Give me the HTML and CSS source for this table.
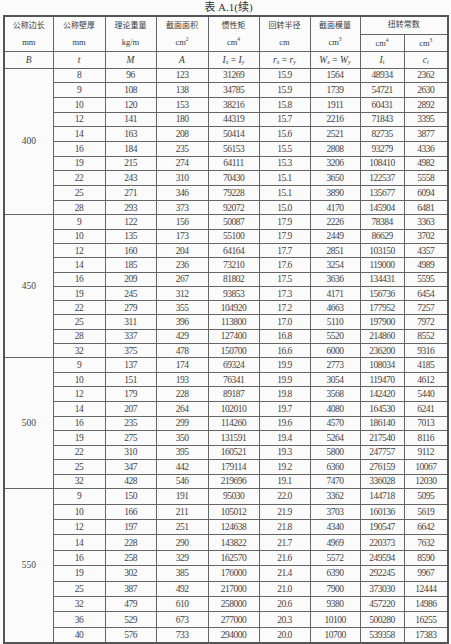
FILE: index.html
```html
<!DOCTYPE html>
<html lang="zh">
<head>
<meta charset="utf-8">
<title>表 A.1(续)</title>
<link rel="stylesheet" href="styles.css">
</head>
<body>
<div class="title">表 A.1(续)</div>
<table class="tbl">
<colgroup>
<col class="c1"><col class="c2"><col class="c3"><col class="c4"><col class="c5"><col class="c6"><col class="c7"><col class="c8"><col class="c9">
</colgroup>
<thead>
<tr class="h1">
<th rowspan="2"><div>公称边长</div><div class="u">mm</div></th>
<th rowspan="2"><div>公称壁厚</div><div class="u">mm</div></th>
<th rowspan="2"><div>理论重量</div><div class="u">kg/m</div></th>
<th rowspan="2"><div>截面面积</div><div class="u">cm<sup>2</sup></div></th>
<th rowspan="2"><div>惯性矩</div><div class="u">cm<sup>4</sup></div></th>
<th rowspan="2"><div>回转半径</div><div class="u">cm</div></th>
<th rowspan="2"><div>截面模量</div><div class="u">cm<sup>3</sup></div></th>
<th colspan="2">扭转常数</th>
</tr>
<tr class="h2">
<th class="u">cm<sup>4</sup></th>
<th class="u">cm<sup>3</sup></th>
</tr>
<tr class="sym">
<th><i>B</i></th>
<th><i>t</i></th>
<th><i>M</i></th>
<th><i>A</i></th>
<th><i>I<sub>x</sub></i> = <i>I<sub>y</sub></i></th>
<th><i>r<sub>x</sub></i> = <i>r<sub>y</sub></i></th>
<th><i>W<sub>x</sub></i> = <i>W<sub>y</sub></i></th>
<th><i>I<sub>t</sub></i></th>
<th><i>c<sub>t</sub></i></th>
</tr>
</thead>
<tbody class="g1">
<tr><td rowspan="10" class="b">400</td><td>8</td><td>96</td><td>123</td><td>31269</td><td>15.9</td><td>1564</td><td>48934</td><td>2362</td></tr>
<tr><td>9</td><td>108</td><td>138</td><td>34785</td><td>15.9</td><td>1739</td><td>54721</td><td>2630</td></tr>
<tr><td>10</td><td>120</td><td>153</td><td>38216</td><td>15.8</td><td>1911</td><td>60431</td><td>2892</td></tr>
<tr><td>12</td><td>141</td><td>180</td><td>44319</td><td>15.7</td><td>2216</td><td>71843</td><td>3395</td></tr>
<tr><td>14</td><td>163</td><td>208</td><td>50414</td><td>15.6</td><td>2521</td><td>82735</td><td>3877</td></tr>
<tr><td>16</td><td>184</td><td>235</td><td>56153</td><td>15.5</td><td>2808</td><td>93279</td><td>4336</td></tr>
<tr><td>19</td><td>215</td><td>274</td><td>64111</td><td>15.3</td><td>3206</td><td>108410</td><td>4982</td></tr>
<tr><td>22</td><td>243</td><td>310</td><td>70430</td><td>15.1</td><td>3650</td><td>122537</td><td>5558</td></tr>
<tr><td>25</td><td>271</td><td>346</td><td>79228</td><td>15.1</td><td>3890</td><td>135677</td><td>6094</td></tr>
<tr><td>28</td><td>293</td><td>373</td><td>92072</td><td>15.0</td><td>4170</td><td>145904</td><td>6481</td></tr>
</tbody>
<tbody class="g2">
<tr><td rowspan="10" class="b">450</td><td>9</td><td>122</td><td>156</td><td>50087</td><td>17.9</td><td>2226</td><td>78384</td><td>3363</td></tr>
<tr><td>10</td><td>135</td><td>173</td><td>55100</td><td>17.9</td><td>2449</td><td>86629</td><td>3702</td></tr>
<tr><td>12</td><td>160</td><td>204</td><td>64164</td><td>17.7</td><td>2851</td><td>103150</td><td>4357</td></tr>
<tr><td>14</td><td>185</td><td>236</td><td>73210</td><td>17.6</td><td>3254</td><td>119000</td><td>4989</td></tr>
<tr><td>16</td><td>209</td><td>267</td><td>81802</td><td>17.5</td><td>3636</td><td>134431</td><td>5595</td></tr>
<tr><td>19</td><td>245</td><td>312</td><td>93853</td><td>17.3</td><td>4171</td><td>156736</td><td>6454</td></tr>
<tr><td>22</td><td>279</td><td>355</td><td>104920</td><td>17.2</td><td>4663</td><td>177952</td><td>7257</td></tr>
<tr><td>25</td><td>311</td><td>396</td><td>113800</td><td>17.0</td><td>5110</td><td>197900</td><td>7972</td></tr>
<tr><td>28</td><td>337</td><td>429</td><td>127400</td><td>16.8</td><td>5520</td><td>214860</td><td>8552</td></tr>
<tr><td>32</td><td>375</td><td>478</td><td>150700</td><td>16.6</td><td>6000</td><td>236200</td><td>9316</td></tr>
</tbody>
<tbody class="g3">
<tr><td rowspan="9" class="b">500</td><td>9</td><td>137</td><td>174</td><td>69324</td><td>19.9</td><td>2773</td><td>108034</td><td>4185</td></tr>
<tr><td>10</td><td>151</td><td>193</td><td>76341</td><td>19.9</td><td>3054</td><td>119470</td><td>4612</td></tr>
<tr><td>12</td><td>179</td><td>228</td><td>89187</td><td>19.8</td><td>3568</td><td>142420</td><td>5440</td></tr>
<tr><td>14</td><td>207</td><td>264</td><td>102010</td><td>19.7</td><td>4080</td><td>164530</td><td>6241</td></tr>
<tr><td>16</td><td>235</td><td>299</td><td>114260</td><td>19.6</td><td>4570</td><td>186140</td><td>7013</td></tr>
<tr><td>19</td><td>275</td><td>350</td><td>131591</td><td>19.4</td><td>5264</td><td>217540</td><td>8116</td></tr>
<tr><td>22</td><td>310</td><td>395</td><td>160521</td><td>19.3</td><td>5800</td><td>247757</td><td>9112</td></tr>
<tr><td>25</td><td>347</td><td>442</td><td>179114</td><td>19.2</td><td>6360</td><td>276159</td><td>10067</td></tr>
<tr><td>32</td><td>428</td><td>546</td><td>219696</td><td>19.1</td><td>7470</td><td>336028</td><td>12030</td></tr>
</tbody>
<tbody class="g4">
<tr><td rowspan="10" class="b">550</td><td>9</td><td>150</td><td>191</td><td>95030</td><td>22.0</td><td>3362</td><td>144718</td><td>5095</td></tr>
<tr><td>10</td><td>166</td><td>211</td><td>105012</td><td>21.9</td><td>3703</td><td>160136</td><td>5619</td></tr>
<tr><td>12</td><td>197</td><td>251</td><td>124638</td><td>21.8</td><td>4340</td><td>190547</td><td>6642</td></tr>
<tr><td>14</td><td>228</td><td>290</td><td>143822</td><td>21.7</td><td>4969</td><td>220373</td><td>7632</td></tr>
<tr><td>16</td><td>258</td><td>329</td><td>162570</td><td>21.6</td><td>5572</td><td>249594</td><td>8590</td></tr>
<tr><td>19</td><td>302</td><td>385</td><td>176000</td><td>21.4</td><td>6390</td><td>292245</td><td>9967</td></tr>
<tr><td>25</td><td>387</td><td>492</td><td>217000</td><td>21.0</td><td>7900</td><td>373030</td><td>12444</td></tr>
<tr><td>32</td><td>479</td><td>610</td><td>258000</td><td>20.6</td><td>9380</td><td>457220</td><td>14986</td></tr>
<tr><td>36</td><td>529</td><td>673</td><td>277000</td><td>20.3</td><td>10100</td><td>500280</td><td>16255</td></tr>
<tr><td>40</td><td>576</td><td>733</td><td>294000</td><td>20.0</td><td>10700</td><td>539358</td><td>17383</td></tr>
</tbody>
</table>
</body>
</html>
```

FILE: styles.css
```css
html, body {
  margin: 0;
  padding: 0;
  background: #fbfbfb;
  color: #444;
  font-family: "Liberation Serif", "Noto Sans CJK SC", serif;
}
body {
  width: 451px;
  height: 644px;
  overflow: hidden;
}
.title {
  height: 15px;
  line-height: 15px;
  text-align: center;
  font-size: 11px;
  padding-left: 6px;
  color: #333;
}
.tbl {
  margin-left: 3px;
  border-collapse: collapse;
  table-layout: fixed;
  width: 444px;
  border: 2px solid #555;
}
.c1 { width: 49px; }
.c2 { width: 52px; }
.c3 { width: 51px; }
.c4 { width: 52px; }
.c5 { width: 51px; }
.c6 { width: 51px; }
.c7 { width: 50px; }
.c8 { width: 44px; }
.c9 { width: 44px; }
.tbl th, .tbl td {
  border: 1px solid #666;
  padding: 0;
  text-align: center;
  vertical-align: middle;
  font-weight: normal;
  white-space: nowrap;
  overflow: hidden;
}
.tbl th {
  font-size: 8px;
  line-height: 16px;
  color: #3a3a3a;
}
.tbl th .u, .tbl th.u {
  font-size: 8.5px;
}
.tbl sup {
  font-size: 5.5px;
  vertical-align: 4px;
  line-height: 0;
}
.tbl sub {
  font-size: 6px;
  vertical-align: -1px;
  line-height: 0;
}
.h1 { height: 18px; }
.h2 { height: 17px; }
.h2 th { line-height: 14px; }
.sym { height: 17px; }
.sym th {
  font-size: 9.5px;
  line-height: 14px;
}
.tbl tbody {
  border-top: 1.5px solid #555;
}
.tbl td {
  line-height: 12px;
  font-size: 9.5px;
  letter-spacing: -0.5px;
}
.g1 tr { height: 14.7px; }
.g2 tr { height: 14.3px; }
.g3 tr { height: 14.55px; }
.g4 tr { height: 15.4px; }
.tbl td.b {
  font-size: 9.5px;
  letter-spacing: 0;
}
```
